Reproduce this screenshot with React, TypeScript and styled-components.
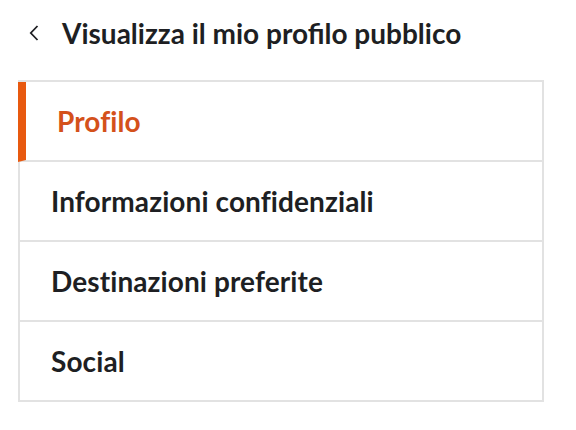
import styled, { createGlobalStyle } from 'styled-components'

const GlobalStyle = createGlobalStyle`
  body {
    margin: 0;
    background: #ffffff;
    font-family: Lato, "Noto Sans", sans-serif;
    color: #1e1f23;
  }
`

const Page = styled.div`
  width: 576px;
  padding: 10px 32px 0 18px;
  box-sizing: border-box;
`

const BackLink = styled.a`
  display: flex;
  align-items: center;
  gap: 23px;
  height: 46px;
  padding-left: 11px;
  margin-bottom: 24px;
  font-size: 28px;
  font-weight: 700;
  color: #1e1f23;
  text-decoration: none;
  cursor: pointer;
`

const Menu = styled.nav`
  display: flex;
  flex-direction: column;
  border: 2px solid #e2e2e2;
  border-bottom: none;
`

const MenuItem = styled.div<{ $active?: boolean }>`
  display: flex;
  align-items: center;
  height: 78px;
  margin-left: ${(p) => (p.$active ? '-2px' : '0')};
  padding-left: 31px;
  border-left: ${(p) => (p.$active ? '8px solid #e8590f' : 'none')};
  border-bottom: 2px solid #e2e2e2;
  font-size: 28px;
  font-weight: 700;
  letter-spacing: 0.1px;
  color: ${(p) => (p.$active ? '#d4511b' : '#1e1f23')};
  cursor: pointer;
`

const items = ['Profilo', 'Informazioni confidenziali', 'Destinazioni preferite', 'Social']

export default function App() {
  return (
    <>
      <GlobalStyle />
      <Page>
        <BackLink>
          <svg width="10" height="16" viewBox="0 0 10 16" fill="none">
            <path d="M8.5 1 L1.8 8 L8.5 15" stroke="#1e1f23" strokeWidth="1.8" />
          </svg>
          Visualizza il mio profilo pubblico
        </BackLink>
        <Menu>
          {items.map((label, i) => (
            <MenuItem key={label} $active={i === 0}>
              {label}
            </MenuItem>
          ))}
        </Menu>
      </Page>
    </>
  )
}
